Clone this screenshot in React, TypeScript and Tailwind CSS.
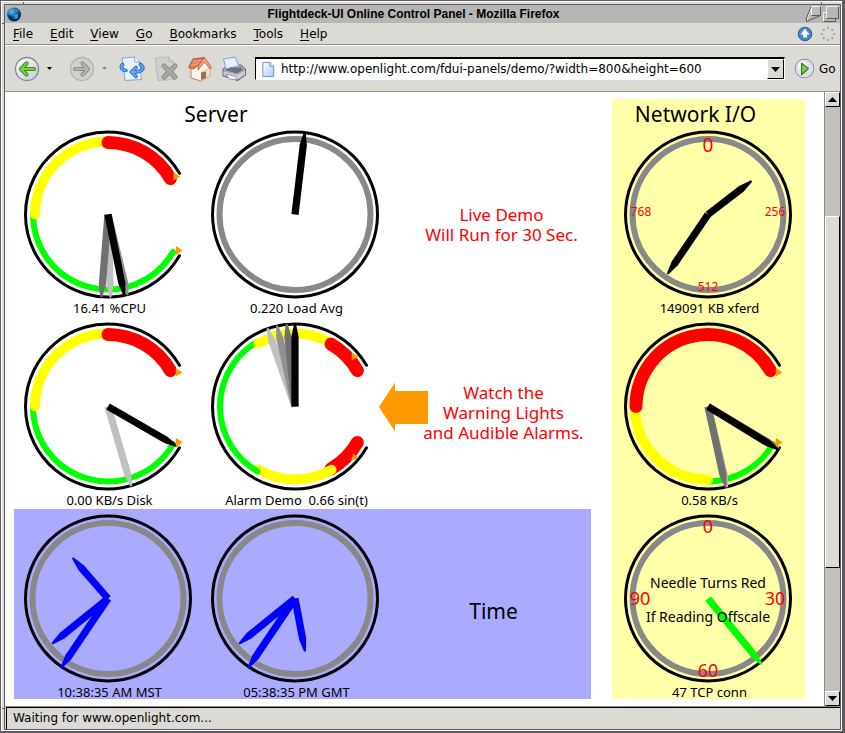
import type { ReactNode } from 'react';

type Zone = { from: number; to: number; level: 'ok' | 'warn' | 'alarm' };
type Hand = { angle: number; length?: number; color: string };
type Mark = { x: number; y: number; text: string; size: number; color?: string };

const CX = 94;
const CY = 89.5;

const zoneStyle = {
  ok: { color: '#00ff00', width: 6, radius: 75 },
  warn: { color: '#ffff00', width: 10, radius: 73 },
  alarm: { color: '#ff0000', width: 13, radius: 72 },
};

function polar(radius: number, angle: number) {
  const a = (angle * Math.PI) / 180;
  return `${(CX + radius * Math.cos(a)).toFixed(2)} ${(CY + radius * Math.sin(a)).toFixed(2)}`;
}

function arc(radius: number, from: number, to: number) {
  const large = to - from > 180 ? 1 : 0;
  return `M${polar(radius, from)} A${radius} ${radius} 0 ${large} 1 ${polar(radius, to)}`;
}

function Needle({ angle, length = 83, color }: Hand) {
  const s = length - 13;
  return (
    <polygon
      points={`0,-3.6 ${s},-3.6 ${length},-0.9 ${length},0.9 ${s},3.6 0,3.6`}
      fill={color}
      transform={`translate(${CX} ${CY}) rotate(${angle})`}
    />
  );
}

function Gauge(props: {
  caption: string;
  zones?: Zone[];
  hands: Hand[];
  limits?: string[];
  marks?: Mark[];
}) {
  const { caption, zones, hands, limits = [], marks = [] } = props;
  return (
    <figure className="flex h-48 flex-col items-center">
      <svg viewBox="0 0 188 174" className="h-[174px] w-[188px] shrink-0" role="img" aria-label={caption}>
        {zones ? (
          <>
            <path d={arc(82.5, 30, 330)} fill="none" stroke="#000" strokeWidth="3" strokeLinecap="round" />
            {zones.map((z) => (
              <path
                key={z.from}
                d={arc(zoneStyle[z.level].radius, z.from, z.to)}
                fill="none"
                stroke={zoneStyle[z.level].color}
                strokeWidth={zoneStyle[z.level].width}
                strokeLinecap="round"
              />
            ))}
          </>
        ) : (
          <>
            <circle cx={CX} cy={CY} r="82.5" fill="none" stroke="#000" strokeWidth="3" />
            <circle cx={CX} cy={CY} r="75.5" fill="none" stroke="#888" strokeWidth="6" />
          </>
        )}
        {hands.map((h, i) => (
          <Needle key={i} {...h} />
        ))}
        {limits.map((p) => (
          <polygon key={p} points={p} fill="#ff9900" transform={`translate(${CX} ${CY})`} />
        ))}
        {marks.map((m) => (
          <text key={m.text} x={m.x} y={m.y} fontSize={m.size} fill={m.color ?? '#ff0000'} textAnchor="middle">
            {m.text}
          </text>
        ))}
      </svg>
      <figcaption className="pl-1 text-[13px] leading-[18px] whitespace-pre">{caption}</figcaption>
    </figure>
  );
}

const LOW = '67.8,31.3 74.5,36 67.8,40.7';
const HIGH = '67.8,-38.5 74.5,-34 67.8,-30';

const loadZones: Zone[] = [
  { from: 30, to: 180, level: 'ok' },
  { from: 180, to: 270, level: 'warn' },
  { from: 270, to: 330, level: 'alarm' },
];
const netZones: Zone[] = [
  { from: 30, to: 90, level: 'ok' },
  { from: 90, to: 180, level: 'warn' },
  { from: 180, to: 330, level: 'alarm' },
];
const sineZones: Zone[] = [
  { from: 30, to: 60, level: 'alarm' },
  { from: 60, to: 120, level: 'warn' },
  { from: 120, to: 240, level: 'ok' },
  { from: 240, to: 300, level: 'warn' },
  { from: 300, to: 330, level: 'alarm' },
];

function clockHands(hourAngle: number): Hand[] {
  return [
    { angle: hourAngle, length: 54, color: '#0000ff' },
    { angle: 141, length: 72, color: '#0000ff' },
    { angle: 124, length: 84, color: '#0000ff' },
  ];
}

function Panels() {
  return (
    <main className="flex min-w-0 flex-1 items-start gap-[21px] bg-white pt-[7px] pr-[19px] pb-[6px] pl-[9px] font-['Noto_Sans','Open_Sans',sans-serif] text-black">
      <section className="flex-1">
        <h1 className="h-[26px] w-[70%] text-center text-[21px] leading-[30px]">Server</h1>
        <div className="grid grid-cols-[187px_187px_1fr]">
          <Gauge
            caption="16.41 %CPU"
            zones={loadZones}
            limits={[LOW, '65.5,-42.5 72,-38 65.5,-34']}
            hands={[
              { angle: 88.3, color: '#c0c0c0' },
              { angle: 76.3, color: '#909090' },
              { angle: 94.6, color: '#707070' },
              { angle: 78.6, color: '#000' },
            ]}
          />
          <Gauge caption="0.220 Load Avg" hands={[{ angle: -83.2, color: '#000' }]} />
          <p className="self-center pt-2 pl-6 text-center text-[17px] leading-5 whitespace-nowrap text-[#ff0000]">
            Live Demo
            <br />
            Will Run for 30 Sec.
          </p>
          <Gauge
            caption="0.00 KB/s Disk"
            zones={loadZones}
            limits={[LOW, HIGH]}
            hands={[
              { angle: 73.8, color: '#c0c0c0' },
              { angle: 30, length: 80, color: '#000' },
            ]}
          />
          <Gauge
            caption="Alarm Demo  0.66 sin(t)"
            zones={sineZones}
            limits={['56.7,-54 63.7,-49.7 56.7,-46', '58.3,46.7 63.7,51.3 56,54.5']}
            hands={[
              { angle: 250.6, color: '#c0c0c0' },
              { angle: 257.5, color: '#909090' },
              { angle: 264.2, color: '#707070' },
              { angle: 270, color: '#000' },
            ]}
          />
          <div className="-ml-[10px] flex items-center pb-3">
            <svg viewBox="0 0 50 50" className="h-[50px] w-[50px] shrink-0" aria-hidden="true">
              <path d="M1 25 17 0.5V9H50V42H17V49.500Z" fill="#ff9900" />
            </svg>
            <p className="-ml-3 flex-1 pt-3 text-center text-[17px] leading-5 whitespace-nowrap text-[#ff0000]">
              Watch the
              <br />
              Warning Lights
              <br />
              and Audible Alarms.
            </p>
          </div>
        </div>
        <div className="grid h-[190px] grid-cols-[187px_187px_1fr] bg-[#aaaaff]">
          <Gauge caption="10:38:35 AM MST" hands={clockHands(229)} />
          <Gauge caption="05:38:35 PM GMT" hands={clockHands(79.3)} />
          <h2 className="self-center pt-3 pl-2 text-center text-[21px] leading-7">Time</h2>
        </div>
      </section>
      <section className="h-[600px] w-[193px] bg-[#ffffaa] pr-0.5">
        <h1 className="h-[26px] pr-6 text-center text-[21px] leading-[30px]">Network I/O</h1>
        <Gauge
          caption="149091 KB xferd"
          hands={[
            { angle: -37.6, length: 55, color: '#000' },
            { angle: 124.2, length: 72, color: '#000' },
          ]}
          marks={[
            { x: 94, y: 27, text: '0', size: 19 },
            { x: 161, y: 91, text: '256', size: 12 },
            { x: 94, y: 166, text: '512', size: 12 },
            { x: 27, y: 91, text: '768', size: 12 },
          ]}
        />
        <Gauge
          caption="0.58 KB/s"
          zones={netZones}
          limits={[LOW, HIGH]}
          hands={[
            { angle: 76.6, color: '#c0c0c0' },
            { angle: 30.6, color: '#909090' },
            { angle: 77.6, color: '#707070' },
            { angle: 31.4, color: '#000' },
          ]}
        />
        <Gauge
          caption="47 TCP conn"
          hands={[{ angle: 50.8, length: 85, color: '#00ff00' }]}
          marks={[
            { x: 94, y: 24, text: '0', size: 18 },
            { x: 161, y: 96, text: '30', size: 18 },
            { x: 94, y: 168, text: '60', size: 18 },
            { x: 26, y: 96, text: '90', size: 18 },
            { x: 94, y: 79, text: 'Needle Turns Red', size: 14, color: '#000' },
            { x: 94, y: 113, text: 'If Reading Offscale', size: 14, color: '#000' },
          ]}
        />
      </section>
    </main>
  );
}

const bevel = 'border border-t-white border-l-white border-r-black border-b-black bg-[#dcdad5]';

function ScrollBar() {
  return (
    <div className="flex w-4 shrink-0 flex-col border-l border-[#8d8b86] bg-[#c3c1bc]">
      <button aria-label="Scroll up" className={`flex h-[15px] items-center justify-center ${bevel}`}>
        <svg viewBox="0 0 9 5" className="h-[5px] w-[9px]">
          <path d="M4.500 0 9 5H0Z" />
        </svg>
      </button>
      <div className="grow-[109]" />
      <div className={`grow-[351] ${bevel}`} />
      <div className="grow-[123]" />
      <button aria-label="Scroll down" className={`flex h-[15px] items-center justify-center ${bevel}`}>
        <svg viewBox="0 0 9 5" className="h-[5px] w-[9px]">
          <path d="M4.500 5 9 0H0Z" />
        </svg>
      </button>
    </div>
  );
}

function TitleBar() {
  return (
    <header className="flex h-[18px] items-center bg-[#b6b6b6]">
      <svg viewBox="0 0 16 16" className="ml-px h-4 w-4">
        <defs>
          <radialGradient id="globe" cx="0.35" cy="0.3" r="0.75">
            <stop offset="0" stopColor="#59b8e8" />
            <stop offset="0.5" stopColor="#1763a5" />
            <stop offset="1" stopColor="#04143f" />
          </radialGradient>
        </defs>
        <circle cx="8" cy="8.500" r="7" fill="url(#globe)" />
        <path d="M3 5 6 3 7 6 5 8ZM8 9 12 8 12 12 9 13ZM10 3 13 5 11 6Z" fill="#4fb6de" opacity=".7" />
        <path d="M2 9 6 10 7 14 4 13Z" fill="#062257" opacity=".7" />
      </svg>
      <div className="flex-1 text-center font-['Liberation_Sans',Arial,sans-serif] text-[12px] leading-4 font-bold">
        Flightdeck-UI Online Control Panel - Mozilla Firefox
      </div>
      <button aria-label="Minimize">
        <svg viewBox="0 0 18 18" className="h-[18px] w-[18px]" fill="none">
          <path d="M7 1H15.500V10.500H7Z" fill="#bdbdbd" />
          <path d="M6.500 10.500V1.500H15.500M6.500 1.500 1.500 16.500" stroke="#f2f2f2" />
          <path d="M15.500 1.500V10.500H6.500M15.500 10.500 1.500 16.500V13L6 1.500" stroke="#5c585c" />
        </svg>
      </button>
      <button aria-label="Maximize">
        <svg viewBox="0 0 17 18" className="h-[18px] w-[17px]" fill="none">
          <path d="M0.500 16.500V7.500H3.500M3.500 13.500V1.500H15.500" stroke="#f2f2f2" />
          <path d="M15.500 1.500V13.500H3.500M0.500 16.500H12.500V13.500" stroke="#5c585c" />
        </svg>
      </button>
    </header>
  );
}

function MenuBar() {
  const items = ['File', 'Edit', 'View', 'Go', 'Bookmarks', 'Tools', 'Help'];
  return (
    <nav className="flex h-[22px] items-center border-b border-[#94928d] px-2">
      <div className="flex flex-1 gap-[17px]">
        {items.map((item) => (
          <button key={item} className="leading-4">
            <span className="underline underline-offset-2">{item[0]}</span>
            {item.slice(1)}
          </button>
        ))}
      </div>
      <button aria-label="Update available" className="mr-[3px]">
        <svg viewBox="0 0 16 16" className="h-4 w-4">
          <circle cx="8" cy="8" r="6.800" fill="#4288cc" stroke="#27578f" />
          <path d="M8 2.500 12.500 8.500H10V11.500H6V8.500H3.500Z" fill="#fff" />
        </svg>
      </button>
      <svg viewBox="0 0 16 16" className="-mr-2 h-4 w-6" aria-hidden="true">
        <g fill="#a9a6a2">
          {[0, 45, 90, 135, 180, 225, 270, 315].map((a) => (
            <rect key={a} x="7" y="1" width="2" height="2" transform={`rotate(${a} 8 8)`} />
          ))}
        </g>
      </svg>
    </nav>
  );
}

function RoundIcon({ ring, children }: { ring: string; children: ReactNode }) {
  return (
    <svg viewBox="0 0 26 26" className="h-[26px] w-[26px]">
      <defs>
        <linearGradient id="disc" x1="0" y1="0" x2="1" y2="1">
          <stop offset="0" stopColor="#ffffff" />
          <stop offset="1" stopColor="#c5c8d4" />
        </linearGradient>
      </defs>
      <circle cx="13" cy="13" r="11.500" fill={ring === '#b3b1ae' ? '#d2d0cc' : 'url(#disc)'} stroke={ring} strokeWidth="1.300" />
      {children}
    </svg>
  );
}

function Caret({ color }: { color: string }) {
  return (
    <svg viewBox="0 0 5 3" className="h-[3px] w-[5px]" aria-hidden="true">
      <path d="M0 0H5L2.500 3Z" fill={color} />
    </svg>
  );
}

function ToolBar() {
  return (
    <div className="flex h-[47px] items-center border-t border-b border-t-white border-b-[#94928d] pl-[9px]">
      <button aria-label="Back">
        <RoundIcon ring="#7f84a4">
          <path d="M20 13H8M12.500 7.500 7 13 12.500 18.500" fill="none" stroke="#3d8a1e" strokeWidth="4.200" strokeLinecap="round" strokeLinejoin="round" />
          <path d="M20 13H8M12.500 7.500 7 13 12.500 18.500" fill="none" stroke="#7ccf3f" strokeWidth="2.200" strokeLinecap="round" strokeLinejoin="round" />
        </RoundIcon>
      </button>
      <button aria-label="Back history" className="ml-[7px]"><Caret color="#000" /></button>
      <button aria-label="Forward" className="ml-[17px]">
        <RoundIcon ring="#b3b1ae">
          <path d="M6 13H18M13.500 7.500 19 13 13.500 18.500" fill="none" stroke="#8e8c89" strokeWidth="4.200" strokeLinecap="round" strokeLinejoin="round" />
          <path d="M6 13H18M13.500 7.500 19 13 13.500 18.500" fill="none" stroke="#b5b3b0" strokeWidth="2.200" strokeLinecap="round" strokeLinejoin="round" />
        </RoundIcon>
      </button>
      <button aria-label="Forward history" className="ml-[7px]"><Caret color="#8c8a86" /></button>
      <button aria-label="Reload" className="ml-3">
        <svg viewBox="0 0 26 26" className="h-[26px] w-[26px]" fill="none" strokeLinecap="round" strokeLinejoin="round">
          <path d="M3.500 2 15.500 1 20.500 6 22.500 23.500 6.500 24.500Z" fill="#e9effb" stroke="#8aa0d8" />
          <path d="M15.500 1 16 6 20.500 6" stroke="#8aa0d8" fill="#fff" />
          <path d="M3.500 8.500C1 11 3 14.500 7 14.500M21.500 8.500C26 11.500 24.500 16 14 16M17 11.500 12.500 16 17 20.500" stroke="#2464c2" strokeWidth="3.600" />
          <path d="M3.500 8.500C1 11 3 14.500 7 14.500M21.500 8.500C26 11.500 24.500 16 14 16M17 11.500 12.500 16 17 20.500" stroke="#62aaf7" strokeWidth="1.800" />
        </svg>
      </button>
      <button aria-label="Stop" className="ml-2">
        <svg viewBox="0 0 26 26" className="h-[26px] w-[26px]" fill="none" strokeLinecap="round">
          <path d="M2.500 2 15.500 1 20.500 6 21 23.500 5.500 24.500Z" fill="#d1cfcb" stroke="#bab8b4" />
          <path d="M15.500 1 16 6 20.500 6" stroke="#bab8b4" />
          <path d="M11 10 22 21M22 10 11 21" stroke="#8f8d8a" strokeWidth="5" />
          <path d="M11 10 22 21M22 10 11 21" stroke="#aaa8a5" strokeWidth="3" />
        </svg>
      </button>
      <button aria-label="Home" className="ml-2">
        <svg viewBox="0 0 26 26" className="h-[26px] w-[26px]" strokeLinejoin="round">
          <path d="M4 11.500V22L14 25 23 20V11.500L18 4Z" fill="#fdf3e6" stroke="#a9887a" />
          <path d="M14 14.500V25L23 20V11Z" fill="#eedac3" />
          <path d="M14 24V16.500L19 15.500V22Z" fill="#9c6d52" />
          <path d="M1.500 11.500 6 3 17.500 1.500 11.500 9.500 6 13Z" fill="#e5805e" stroke="#b3543a" />
          <path d="M11.500 9.500 17.500 1.500 24.500 11.500 23 13 17.500 6 11 14Z" fill="#f3a888" stroke="#b3543a" strokeWidth=".8" />
          <path d="M4 9 12 7.500M6 5.500 14 4.500" stroke="#f2a587" />
        </svg>
      </button>
      <button aria-label="Print" className="ml-2">
        <svg viewBox="0 0 26 26" className="h-[26px] w-[26px]" strokeLinejoin="round">
          <path d="M2 13 7 9H20L24.500 13V19L17 24.500 2 20Z" fill="#a7a7b7" stroke="#666678" />
          <path d="M5 13 2.500 3 14 1 18 10Z" fill="#e4efff" stroke="#7fa0dc" />
          <path d="M4 14 9 11.500 20 11.500 22 14 16 17.500Z" fill="#6f6f80" />
          <path d="M2.500 15.500 16.500 19 24 14.500V18L17 23 2.500 19Z" fill="#ceced9" />
          <path d="M5 18 14.500 20.500 16 24 8 23Z" fill="#f6f6fb" stroke="#777788" strokeWidth=".7" />
        </svg>
      </button>
      <form className="ml-2 flex flex-1 items-center" onSubmit={(e) => e.preventDefault()}>
        <div className="flex h-[23px] flex-1 items-center border border-t-2 border-t-black border-r-white border-b-white border-l-black bg-white">
          <svg viewBox="0 0 16 18" className="ml-1 h-[17px] w-4" aria-hidden="true">
            <defs>
              <linearGradient id="sheet" x1="0" y1="0" x2="1" y2="1">
                <stop offset="0" stopColor="#fff" />
                <stop offset="1" stopColor="#a9c9fa" />
              </linearGradient>
            </defs>
            <path d="M2.500 1.500H10L14 5.500V16.500H2.500Z" fill="url(#sheet)" stroke="#7388c9" />
            <path d="M10 1.500V5.500H14" fill="#dce7fc" stroke="#7388c9" />
          </svg>
          <input
            aria-label="Location"
            className="ml-[5px] min-w-0 flex-1 bg-transparent text-[12px] leading-5 outline-none"
            defaultValue="http://www.openlight.com/fdui-panels/demo/?width=800&height=600"
          />
          <button type="button" aria-label="Show history" className={`flex h-5 w-[17px] items-center justify-center ${bevel}`}>
            <svg viewBox="0 0 9 5" className="h-[5px] w-[9px]">
              <path d="M4.500 5 9 0H0Z" />
            </svg>
          </button>
        </div>
        <button className="ml-[9px] flex w-[46px] items-center gap-1">
          <svg viewBox="0 0 22 22" className="h-[21px] w-[21px]">
            <circle cx="11" cy="11" r="9.800" fill="#dfe1ea" stroke="#8386a0" />
            <circle cx="9" cy="8" r="5" fill="#fff" opacity=".6" />
            <path d="M8 5.500 15 11 8 17.500Z" fill="#85d05a" stroke="#2f8524" strokeWidth="1.400" strokeLinejoin="round" />
          </svg>
          Go
        </button>
      </form>
    </div>
  );
}

export default function App() {
  return (
    <div className="flex min-h-screen flex-col border border-r-[3px] border-b-2 border-[#605c60] bg-[#dcd8dc]">
      <div className="relative flex flex-1 flex-col border border-white pt-0.5 pl-0.5">
        <i className="absolute top-0 left-[21px] h-[3px] w-px bg-[#605c60]" />
        <i className="absolute top-[21px] left-0 h-px w-[3px] bg-[#605c60]" />
        <i className="absolute top-0 right-[19px] h-[3px] w-px bg-[#605c60]" />
        <i className="absolute bottom-[21px] left-0 h-px w-[3px] bg-[#605c60]" />
        <div className="flex flex-1 flex-col border border-[#605c60] bg-[#dcdad5] font-['DejaVu_Sans',Verdana,sans-serif] text-[12px] text-black">
          <TitleBar />
          <MenuBar />
          <ToolBar />
          <div className="flex flex-1">
            <Panels />
            <ScrollBar />
          </div>
          <footer className="border-t border-[#8d8b86] bg-[#dcdad5] pl-px">
            <div className="border-t border-l border-black px-1.5 pb-px leading-[20px]">Waiting for www.openlight.com...</div>
          </footer>
        </div>
      </div>
    </div>
  );
}
